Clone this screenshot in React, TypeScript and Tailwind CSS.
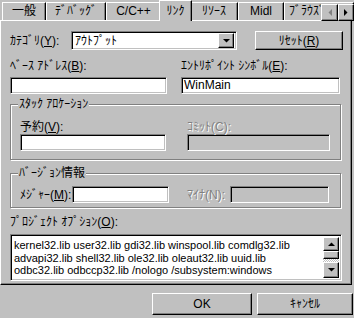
const sunken =
  "border border-t-[#808080] border-l-[#808080] border-b-white border-r-white shadow-[inset_1px_1px_0_#000,inset_-1px_-1px_0_#c0c0c0]";
const raised =
  "border border-t-white border-l-white border-b-black border-r-black shadow-[inset_-1px_-1px_0_#808080]";
const etched = "border border-[#808080] shadow-[1px_1px_0_#fff,inset_1px_1px_0_#fff]";
const disabledText = "text-[#808080] [text-shadow:1px_1px_0_#fff]";

function Tab({ label, w, selected }: { label: string; w: string; selected?: boolean }) {
  if (selected) {
    return (
      <div
        className={`relative z-10 -mx-[2px] h-[21px] self-start ${w} flex items-center justify-center border-t border-l border-r border-t-white border-l-white border-r-black bg-[#c0c0c0] shadow-[inset_-1px_0_0_#808080] leading-[14px]`}
      >
        {label}
      </div>
    );
  }
  return (
    <div
      className={`mt-[2px] h-[18px] shrink-0 ${w} flex items-center justify-center border-t border-l border-r border-t-white border-l-white border-r-black shadow-[inset_-1px_0_0_#808080] leading-[14px] pb-[1px]`}
    >
      {label}
    </div>
  );
}

function Arrow({ dir, color }: { dir: "up" | "down" | "left" | "right"; color: string }) {
  const pts = {
    up: "0,4 7,4 3.5,0.5",
    down: "0,0 7,0 3.5,3.5",
    left: "4,0 4,7 0.5,3.5",
    right: "0,0 0,7 3.5,3.5",
  }[dir];
  const vertical = dir === "up" || dir === "down";
  return (
    <svg width={vertical ? 7 : 4} height={vertical ? 4 : 7} viewBox={vertical ? "0 0 7 4" : "0 0 4 7"}>
      <polygon points={pts} fill={color} />
    </svg>
  );
}

function Field({ w, text, disabled }: { w: string; text?: string; disabled?: boolean }) {
  return (
    <div
      className={`${sunken} ${w} h-[17px] ${disabled ? "bg-[#c0c0c0]" : "bg-white"} flex items-center pl-[2px] leading-[13px]`}
    >
      {text}
    </div>
  );
}

export default function App() {
  return (
    <div
      className="relative w-[354px] h-[318px] overflow-hidden bg-[#c0c0c0] text-black text-[12px]"
      style={{ fontFamily: '"Liberation Sans", "Noto Sans CJK JP", sans-serif' }}
    >
      {/* tab strip */}
      <div className="relative flex h-[20px] pl-[2px]">
        <Tab label="一般" w="w-[44px]" />
        <Tab label="ﾃﾞﾊﾞｯｸﾞ" w="w-[60px]" />
        <Tab label="C/C++" w="w-[55px]" />
        <Tab label="ﾘﾝｸ" w="w-[46px]" selected />
        <Tab label="ﾘｿｰｽ" w="w-[48px]" />
        <Tab label="Midl" w="w-[46px]" />
        <Tab label="ﾌﾞﾗｳｽﾞ情報" w="w-[70px]" />
        <div className="absolute right-0 top-[4px] z-20 flex">
          <div className={`${raised} w-[17px] h-[17px] bg-[#c0c0c0] flex items-center justify-center`}>
            <Arrow dir="left" color="#808080" />
          </div>
          <div className={`${raised} w-[16px] h-[17px] bg-[#c0c0c0] flex items-center justify-center`}>
            <Arrow dir="right" color="#000" />
          </div>
        </div>
      </div>

      {/* tab page */}
      <div className="w-[352px] h-[265px] border border-t-white border-l-white border-b-black border-r-black shadow-[inset_-1px_-1px_0_#808080] pl-[9px] pt-[10px]">
        <div className="flex items-center h-[19px]">
          <div className="w-[61px] leading-[14px]">
            ｶﾃｺﾞﾘ(<u>Y</u>):
          </div>
          <div className={`${sunken} w-[166px] h-[19px] bg-white flex items-center justify-between pl-[3px] pr-[2px]`}>
            <span className="leading-[14px]">ｱｳﾄﾌﾟｯﾄ</span>
            <div className={`${raised} w-[16px] h-[15px] bg-[#c0c0c0] flex items-center justify-center`}>
              <Arrow dir="down" color="#000" />
            </div>
          </div>
          <div className={`${raised} ml-[18px] w-[88px] h-[19px] bg-[#c0c0c0] flex items-center justify-center leading-[14px]`}>
            ﾘｾｯﾄ(<u>R</u>)
          </div>
        </div>

        <div className="flex gap-[14px] mt-[9px]">
          <div className="w-[157px]">
            <div className="h-[14px] leading-[14px]">
              ﾍﾞｰｽ ｱﾄﾞﾚｽ(<u>B</u>):
            </div>
            <div className="mt-[4px]">
              <Field w="w-[157px]" />
            </div>
          </div>
          <div className="w-[159px]">
            <div className="h-[14px] leading-[14px]">
              ｴﾝﾄﾘﾎﾟｲﾝﾄ ｼﾝﾎﾞﾙ(<u>E</u>):
            </div>
            <div className="mt-[4px]">
              <Field w="w-[159px]" text="WinMain" />
            </div>
          </div>
        </div>

        <div className={`relative mt-[10px] w-[331px] h-[56px] ${etched} pl-[9px] pt-[15px]`}>
          <div className="absolute -top-[8px] left-[7px] px-[1px] bg-[#c0c0c0] leading-[14px]">ｽﾀｯｸ ｱﾛｹｰｼｮﾝ</div>
          <div className="flex gap-[21px]">
            <div>
              <div className="h-[14px] leading-[14px]">
                予約(<u>V</u>):
              </div>
              <Field w="w-[146px]" />
            </div>
            <div>
              <div className={`h-[14px] leading-[14px] ${disabledText}`}>ｺﾐｯﾄ(C):</div>
              <Field w="w-[143px]" disabled />
            </div>
          </div>
        </div>

        <div className={`relative mt-[13px] w-[331px] h-[35px] ${etched} pl-[9px] pt-[12px]`}>
          <div className="absolute -top-[8px] left-[7px] px-[1px] bg-[#c0c0c0] leading-[14px]">ﾊﾞｰｼﾞｮﾝ情報</div>
          <div className="flex items-center">
            <div className="w-[52px] leading-[14px]">
              ﾒｼﾞｬｰ(<u>M</u>):
            </div>
            <Field w="w-[97px]" />
            <div className={`ml-[18px] w-[43px] leading-[14px] ${disabledText}`}>ﾏｲﾅ(N):</div>
            <Field w="w-[99px]" disabled />
          </div>
        </div>

        <div className="mt-[7px] h-[14px] leading-[14px]">
          ﾌﾟﾛｼﾞｪｸﾄ ｵﾌﾟｼｮﾝ(<u>O</u>):
        </div>
        <div className={`${sunken} mt-[5px] w-[332px] h-[47px] bg-white flex p-[2px]`}>
          <div className="flex-1 pl-[1px] pt-[2px] leading-[12.5px] whitespace-nowrap overflow-hidden text-[11px]">
            <div>kernel32.lib user32.lib gdi32.lib winspool.lib comdlg32.lib</div>
            <div>advapi32.lib shell32.lib ole32.lib oleaut32.lib uuid.lib</div>
            <div>odbc32.lib odbccp32.lib /nologo /subsystem:windows</div>
          </div>
          <div className="w-[16px] h-full flex flex-col">
            <div className={`${raised} h-[14px] bg-[#c0c0c0] flex items-center justify-center`}>
              <Arrow dir="up" color="#000" />
            </div>
            <div className={`${raised} h-[8px] bg-[#c0c0c0]`} />
            <div className="flex-1 bg-[image:repeating-conic-gradient(#fff_0_25%,#c0c0c0_0_50%)] bg-[length:2px_2px]" />
            <div className={`${raised} h-[16px] bg-[#c0c0c0] flex items-center justify-center`}>
              <Arrow dir="down" color="#000" />
            </div>
          </div>
        </div>
      </div>

      {/* dialog buttons */}
      <div className="flex justify-end gap-[5px] mt-[8px] pr-[1px]">
        <div className={`${raised} w-[100px] h-[22px] bg-[#c0c0c0] flex items-center justify-center leading-[14px]`}>OK</div>
        <div className={`${raised} w-[96px] h-[22px] bg-[#c0c0c0] flex items-center justify-center leading-[14px]`}>ｷｬﾝｾﾙ</div>
      </div>
    </div>
  );
}
